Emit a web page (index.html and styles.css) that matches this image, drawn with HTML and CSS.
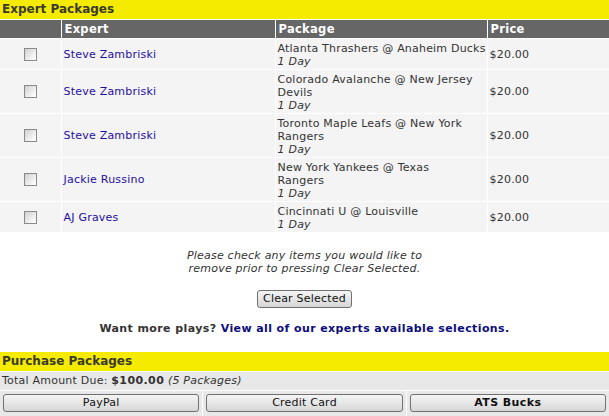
FILE: index.html
```html
<!DOCTYPE html>
<html>
<head>
<meta charset="utf-8">
<link rel="stylesheet" href="styles.css">
</head>
<body>
<div class="bar">Expert Packages</div>
<table class="grid">
  <colgroup><col class="c1"><col class="c2"><col class="c3"><col class="c4"></colgroup>
  <thead>
    <tr><th></th><th>Expert</th><th>Package</th><th>Price</th></tr>
  </thead>
  <tbody>
    <tr><td class="chk"><input type="checkbox"></td><td class="exp"><a href="#">Steve Zambriski</a></td><td class="pkg"><span class="nw">Atlanta Thrashers @ Anaheim Ducks</span><br><i>1 Day</i></td><td class="price">$20.00</td></tr>
    <tr><td class="chk"><input type="checkbox"></td><td class="exp"><a href="#">Steve Zambriski</a></td><td class="pkg">Colorado Avalanche @ New Jersey Devils<br><i>1 Day</i></td><td class="price">$20.00</td></tr>
    <tr><td class="chk"><input type="checkbox"></td><td class="exp"><a href="#">Steve Zambriski</a></td><td class="pkg">Toronto Maple Leafs @ New York Rangers<br><i>1 Day</i></td><td class="price">$20.00</td></tr>
    <tr><td class="chk"><input type="checkbox"></td><td class="exp"><a href="#">Jackie Russino</a></td><td class="pkg">New York Yankees @ Texas<br>Rangers<br><i>1 Day</i></td><td class="price">$20.00</td></tr>
    <tr><td class="chk"><input type="checkbox"></td><td class="exp"><a href="#">AJ Graves</a></td><td class="pkg">Cincinnati U @ Louisville<br><i>1 Day</i></td><td class="price">$20.00</td></tr>
  </tbody>
</table>
<p class="note">Please check any items you would like to remove prior to pressing Clear Selected.</p>
<div class="center"><button class="btn">Clear Selected</button></div>
<p class="more">Want more plays? <a href="#">View all of our experts available selections.</a></p>
<div class="bar">Purchase Packages</div>
<div class="total">Total Amount Due: <b>$100.00</b> <i>(5 Packages)</i></div>
<div class="pay">
  <div class="paycell"><button class="pbtn">PayPal</button></div>
  <div class="paycell"><button class="pbtn">Credit Card</button></div>
  <div class="paycell"><button class="pbtn bold">ATS Bucks</button></div>
</div>
</body>
</html>
```
FILE: styles.css
```css
html, body { margin: 0; padding: 0; background: #fff; }
body { font-family: "DejaVu Sans", Verdana, sans-serif; font-size: 11px; color: #333; letter-spacing: 0.22px; }
b, .bold { font-weight: bold; letter-spacing: 0.4px; }
.bar {
  background: #f5eb00;
  color: #3a3a30;
  font-weight: bold;
  font-size: 12px;
  letter-spacing: 0;
  height: 19px;
  line-height: 19px;
  padding-left: 2px;
  border-bottom: 1px solid #fff;
}
.grid { width: 609px; border-collapse: collapse; table-layout: fixed; }
.c1 { width: 61px; } .c2 { width: 214px; } .c3 { width: 212px; } .c4 { width: 122px; }
.grid th {
  background: #666;
  color: #fff;
  font-weight: bold;
  font-size: 11.5px;
  letter-spacing: 0.3px;
  text-align: left;
  height: 18px;
  padding: 0 0 0 3px;
  border-left: 1px solid #fff;
}
.grid th:first-child, .grid td:first-child { border-left: none; }
.grid td {
  background: #f4f4f4;
  border-left: 1px solid #fff;
  border-top: 1px solid #fff;
  padding: 2px 1px 2px 2px;
  line-height: 13px;
  vertical-align: middle;
}
.grid td.pkg { vertical-align: top; padding-top: 3px; padding-bottom: 1px; padding-right: 0; }
.nw { white-space: nowrap; letter-spacing: 0.2px; }
.grid td.chk { text-align: center; }
.grid td.exp a { color: #1f0fa0; text-decoration: none; }
.grid td.price { padding-left: 2px; }
input[type=checkbox] {
  appearance: none;
  -webkit-appearance: none;
  width: 13px; height: 13px;
  margin: 0; padding: 0;
  border: 1px solid #8a8a8a;
  background: linear-gradient(135deg, #cfcfcf 0%, #f4f4f4 70%, #fff 100%);
  vertical-align: middle;
  display: inline-block;
  box-sizing: border-box;
}
.note {
  font-style: italic;
  width: 250px;
  margin: 17px auto 0;
  text-align: center;
  line-height: 13px;
}
.center { text-align: center; margin-top: 15px; height: 18px; }
.btn, .pbtn {
  font-family: "DejaVu Sans", Verdana, sans-serif;
  font-size: 11px;
  letter-spacing: 0.22px;
  color: #111;
  border: 1px solid #707070;
  border-radius: 3px;
  background: linear-gradient(#f4f4f4, #e6e6e6 50%, #d6d6d6);
  padding: 0 5px;
  height: 18px;
  line-height: 16px;
  cursor: pointer;
}
.pbtn.bold { font-weight: bold; letter-spacing: 0.4px; }
.more {
  font-weight: bold;
  letter-spacing: 0.4px;
  text-align: center;
  margin: 14px 0 17px;
  line-height: 13px;
}
.more a { color: #0d0d7d; text-decoration: none; }
.total {
  background: #e8e8e8;
  height: 18px;
  line-height: 18px;
  padding-left: 2px;
  border-bottom: 1px solid #fff;
}
.pay { display: flex; gap: 1px; background: #fff; }
.paycell { flex: 1; background: #e8e8e8; padding: 3px 3px 6px; }
.pbtn { width: 100%; display: block; }
```
